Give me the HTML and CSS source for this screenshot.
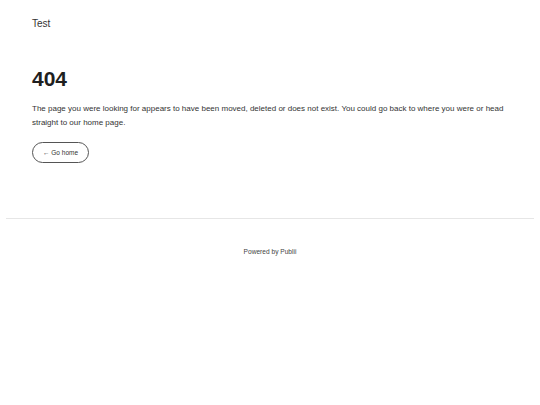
FILE: index.html
```html
<!DOCTYPE html>
<html lang="en">
<head>
<meta charset="utf-8">
<title>404</title>
<link rel="stylesheet" href="styles.css">
</head>
<body>
<header class="top">
  <a class="logo" href="#">Test</a>
</header>
<main class="content">
  <h1 class="title">404</h1>
  <p class="text">The page you were looking for appears to have been moved, deleted or does not exist. You could go back to where you were or head straight to our home page.</p>
  <a class="btn" href="#">&larr; Go home</a>
</main>
<footer class="footer">
  <p class="powered">Powered by Publii</p>
</footer>
</body>
</html>
```
FILE: styles.css
```css
* { box-sizing: border-box; }
html, body { margin: 0; padding: 0; background: #fff; }
body {
  font-family: "Liberation Sans", Arial, sans-serif;
  color: #222;
}
.top {
  padding: 13px 32px 0;
  height: 30px;
}
.logo {
  font-size: 10px;
  line-height: 12px;
  color: #333;
  text-decoration: none;
}
.content {
  padding: 37px 0 0 26px;
  height: 189px;
  border-bottom: 1px solid #e6e6e6;
  margin: 0 6px;
}
.title {
  margin: 0;
  font-size: 21px;
  line-height: 24px;
  font-weight: 700;
  color: #1f1f1f;
}
.text {
  margin: 11px 0 0;
  font-size: 8px;
  line-height: 14px;
  color: #333;
  max-width: 490px;
}
.btn {
  display: inline-flex;
  align-items: center;
  margin-top: 12px;
  height: 21px;
  padding: 0 10px;
  border: 1px solid #555;
  border-radius: 11px;
  font-size: 6.5px;
  color: #333;
  text-decoration: none;
}
.footer {
  padding-top: 28px;
  text-align: center;
}
.powered {
  margin: 0;
  font-size: 6.6px;
  line-height: 9px;
  color: #444;
}
```
